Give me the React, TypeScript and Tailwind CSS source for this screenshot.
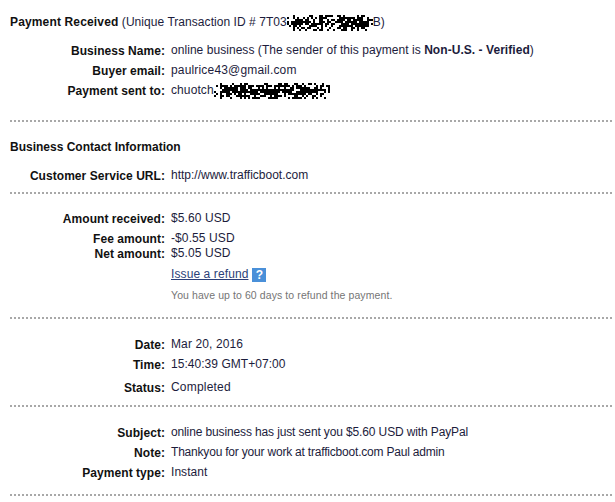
// deterministic speckle for the redacted parts of the screenshot
function speckle(width: number, seed: number) {
  const cells: { x: number; y: number; on: boolean }[] = [];
  let s = seed;
  for (let x = 0; x < width; x += 2) {
    for (let y = 0; y < 16; y += 2) {
      s = (s * 1103515245 + 12345) & 0x7fffffff;
      const edge = Math.abs(y - 7) / 8;
      const ends = Math.min(x, width - x) < 6 ? 0.35 : 0;
      cells.push({ x, y, on: (s >> 8) % 100 < 88 - edge * 60 - ends * 100 });
    }
  }
  return cells.filter((c) => c.on);
}

function Scribble({ width, seed }: { width: number; seed: number }) {
  return (
    <svg width={width} height={16} className="absolute left-0 top-[-2px]" aria-hidden>
      {speckle(width, seed).map((c) => (
        <rect key={`${c.x}-${c.y}`} x={c.x} y={c.y} width={2} height={2} fill="#000" />
      ))}
    </svg>
  );
}

function Row({
  label,
  className,
  valueClass,
  children,
}: {
  label: string;
  className?: string;
  valueClass?: string;
  children?: React.ReactNode;
}) {
  return (
    <div className={`flex h-[15px] items-start leading-[15px] ${className ?? ''}`}>
      <div className="w-[165px] shrink-0 pt-px text-right font-bold tracking-[0.05px] text-[#111]">{label}</div>
      <div className={`ml-[6px] whitespace-nowrap text-[#1c1c3c] ${valueClass ?? ''}`}>{children}</div>
    </div>
  );
}

function Divider({ className }: { className: string }) {
  return <div className={`ml-[10px] h-0 w-[602px] border-t-2 border-dotted border-[#a8a8a8] ${className}`} />;
}

export default function App() {
  return (
    <div className="h-[502px] w-[615px] overflow-hidden bg-white pt-[15px] font-['Liberation_Sans',Arial,sans-serif] text-[12px]">
      <div className="ml-[10px] h-[15px] whitespace-nowrap leading-[15px] tracking-[0.05px] text-[#1c1c3c]">
        <span className="font-bold tracking-[0.15px] text-[#111]">Payment Received</span> (Unique Transaction ID # 7T03
        <span className="relative inline-block h-[12px] w-[86px] align-middle">
          <Scribble width={86} seed={7} />
        </span>
        B)
      </div>

      <Row label="Business Name:" className="mt-[13px]" valueClass="tracking-[0.05px]">
        online business (The sender of this payment is <b>Non-U.S. - Verified</b>)
      </Row>
      <Row label="Buyer email:" className="mt-[5px]" valueClass="tracking-[0.17px]">paulrice43@gmail.com</Row>
      <Row label="Payment sent to:" className="mt-[5px]" valueClass="tracking-[0.1px]">
        chuotch
        <span className="relative inline-block h-[12px] w-[116px] align-middle">
          <Scribble width={116} seed={43} />
        </span>
      </Row>

      <Divider className="mt-[22px]" />

      <div className="ml-[10px] mt-[18px] h-[15px] font-bold leading-[15px] text-[#111]">Business Contact Information</div>
      <Row label="Customer Service URL:" className="mt-[13px]">http://www.trafficboot.com</Row>

      <Divider className="mt-[9px]" />

      <Row label="Amount received:" className="mt-[17px]" valueClass="tracking-[0.1px]">$5.60 USD</Row>
      <Row label="Fee amount:" className="mt-[5px]" valueClass="tracking-[0.1px]">-$0.55 USD</Row>
      <Row label="Net amount:" valueClass="tracking-[0.1px]">$5.05 USD</Row>

      <div className="ml-[171px] mt-[6px] flex h-[15px] items-center gap-[4px] leading-[15px]">
        <a className="tracking-[0.1px] text-[#2b3f78] underline">Issue a refund</a>
        <span className="flex h-[14px] w-[14px] items-center justify-center bg-[#4a90d9] text-[12px] font-bold leading-none text-white">?</span>
      </div>
      <div className="ml-[171px] mt-[6px] h-[15px] text-[10.5px] leading-[15px] tracking-[0.09px] text-[#757575]">You have up to 60 days to refund the payment.</div>

      <Divider className="mt-[14px]" />

      <Row label="Date:" className="mt-[18px]" valueClass="tracking-[0.12px]">Mar 20, 2016</Row>
      <Row label="Time:" className="mt-[5px]" valueClass="tracking-[0.04px]">15:40:39 GMT+07:00</Row>
      <Row label="Status:" className="mt-[8px]" valueClass="tracking-[0.2px]">Completed</Row>

      <Divider className="mt-[10px]" />

      <Row label="Subject:" className="mt-[18px]" valueClass="tracking-[-0.13px]">online business has just sent you $5.60 USD with PayPal</Row>
      <Row label="Note:" className="mt-[5px]" valueClass="tracking-[-0.2px]">Thankyou for your work at trafficboot.com Paul admin</Row>
      <Row label="Payment type:" className="mt-[5px]" valueClass="tracking-[0.05px]">Instant</Row>

      <Divider className="mt-[14px]" />
    </div>
  );
}
